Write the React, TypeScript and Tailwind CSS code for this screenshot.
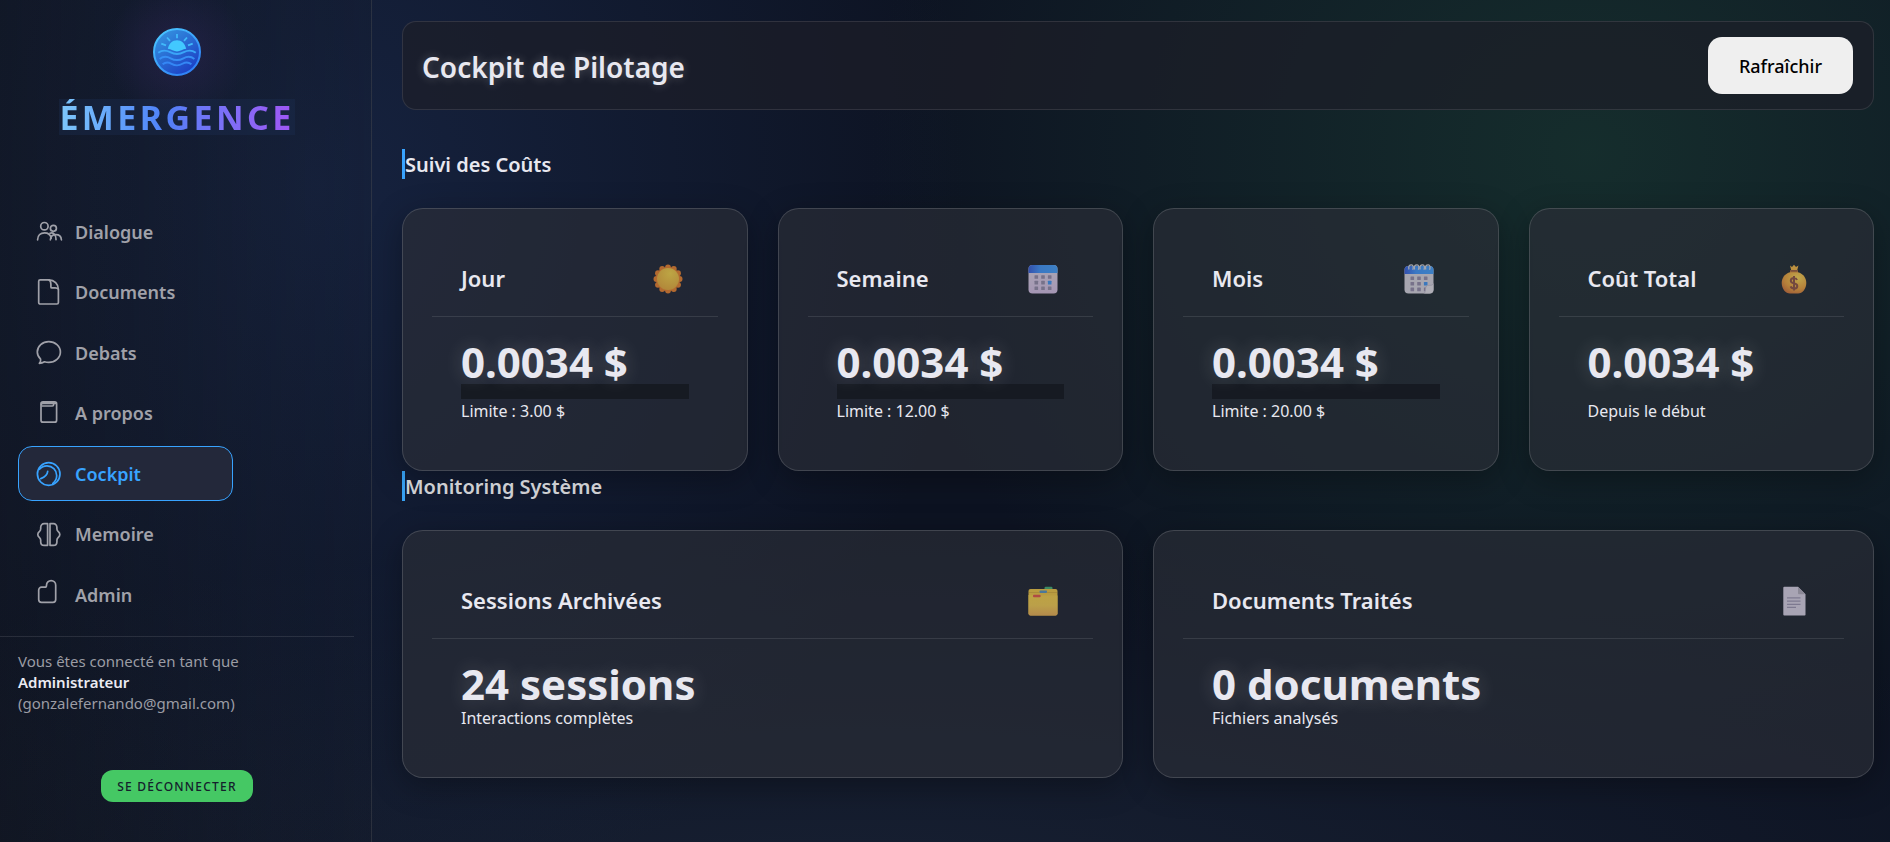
import type { ReactNode } from "react";

type NavEntry = { label: string; icon: ReactNode; active?: boolean };

function LineIcon({ children }: { children: ReactNode }) {
  return (
    <svg
      className="size-[26px] shrink-0 overflow-visible"
      viewBox="0 0 26 26"
      fill="none"
      stroke="currentColor"
      strokeWidth="1.7"
      strokeLinecap="round"
      strokeLinejoin="round"
      aria-hidden="true"
    >
      {children}
    </svg>
  );
}

const NAV: NavEntry[] = [
  {
    label: "Dialogue",
    icon: (
      <LineIcon>
        <circle cx="8.4" cy="7.2" r="3.7" />
        <circle cx="17.4" cy="9.3" r="3" />
        <path d="M1.6 20.8C1.6 16.4 4.6 13.9 8.6 13.9c3.5 0 5.9 2 6.600 5.200" />
        <path d="M14.4 20.8c.2-3.300 2.300-5.200 5.400-5.200s5.400 2 5.600 5.200" />
        <path d="M14 14.200c3.200-1.400 6 1.400 6 6.400" />
      </LineIcon>
    ),
  },
  {
    label: "Documents",
    icon: (
      <LineIcon>
        <path d="M4.2-.2H13c5.2 0 9.4 4.2 9.4 9.4v13.3a1.5 1.5 0 0 1-1.5 1.5H4.2a1.5 1.5 0 0 1-1.5-1.5V1.3A1.5 1.5 0 0 1 4.2-.2Z" />
        <path d="M13 0c1.6.8 1.9 2.4 1.9 4.6V6.9c0 .6.4 1 1 1h3.2c1.5 0 2.7.4 3.2 1.2" />
      </LineIcon>
    ),
  },
  {
    label: "Debats",
    icon: (
      <LineIcon>
        <path d="M3.4 23.4c1.1-1.300 1.500-2.700 1.200-4.300C2.500 17.200 1.300 14.700 1.300 12 1.300 6.200 6.500 1.600 12.800 1.600S24.400 6.100 24.400 12s-5.300 10.400-11.600 10.400c-1.600 0-3-.2-4.300-.6-1.600 1-3.300 1.500-5.100 1.600Z" />
      </LineIcon>
    ),
  },
  {
    label: "A propos",
    icon: (
      <LineIcon>
        <rect x="5" y=".8" width="15.6" height="20.4" rx="2" />
        <path d="M5.4 3.5C5.8 2 6.700 1.700 8 1.700h9.600v2.100c0 .8-.4 1.200-1.200 1.200H6" />
        <path d="M7 2.300h12.500" strokeWidth="2" />
      </LineIcon>
    ),
  },
  {
    label: "Cockpit",
    active: true,
    icon: (
      <LineIcon>
        <circle cx="12.7" cy="13" r="11.3" />
        <path d="M3.500 8.300C5.300 6.200 8 4.900 11 4.900c5.400 0 9.700 4.300 9.700 9.700 0 3.200-1.500 6-3.900 7.800" />
        <path d="M4.800 17.600c4.200-1.600 6.600-4 6.900-7.200" />
      </LineIcon>
    ),
  },
  {
    label: "Memoire",
    icon: (
      <LineIcon>
        <path d="M11.600 1.700v21.600H8.200c-2 0-3.500-1.400-3.500-3.400v-1.600c0-1.500-.4-2-1.200-2.700C1.200 13.700 1.200 11.300 3.500 9.400c.8-.7 1.200-1.200 1.200-2.700V5.500c0-2.300 1.400-3.800 3.500-3.800h3.400Z" />
        <path d="M14 1.700v21.600h3.400c2 0 3.500-1.400 3.500-3.400v-1.600c0-1.500.4-2 1.200-2.700 2.300-1.900 2.300-4.300 0-6.200-.8-.7-1.200-1.200-1.200-2.700V5.500c0-2.300-1.400-3.800-3.500-3.800H14Z" />
      </LineIcon>
    ),
  },
  {
    label: "Admin",
    icon: (
      <LineIcon>
        <path d="M5.500 5.200h3.300c1.200 0 1.700-.6 1.700-1.700V3.200a4.600 4.600 0 0 1 9.200 0v14.400a2.800 2.800 0 0 1-2.800 2.800H5.500a2.800 2.800 0 0 1-2.800-2.800V8a2.800 2.800 0 0 1 2.800-2.800Z" />
      </LineIcon>
    ),
  },
];

function Logo() {
  return (
    <svg className="size-12" viewBox="0 0 48 48" fill="none" aria-hidden="true">
      <defs>
        <linearGradient id="disc" x1="8" y1="4" x2="38" y2="44" gradientUnits="userSpaceOnUse">
          <stop stopColor="#3492e0" />
          <stop offset="1" stopColor="#1c3fc4" />
        </linearGradient>
        <linearGradient id="rim" x1="8" y1="4" x2="38" y2="44" gradientUnits="userSpaceOnUse">
          <stop stopColor="#49c4ff" />
          <stop offset="1" stopColor="#2f80f5" />
        </linearGradient>
      </defs>
      <circle cx="24" cy="24" r="23" fill="url(#disc)" stroke="url(#rim)" strokeWidth="2" />
      <path
        d="M24 6v4.3M14 9.500l3 3.400M34 9.500l-3 3.400M8.300 15.600l4.700 1.800M39.700 15.600 35 17.400"
        stroke="#41b9fa"
        strokeWidth="1.8"
      />
      <path
        d="M14.8 20.800C16 15.700 19.400 12.300 24 12.300s8 3.400 9.200 8.500c-1.800.1-3.200.8-4.700 1.500-3.200 1.500-5.800 1.500-9 0-1.500-.7-2.900-1.400-4.700-1.500Z"
        fill="#42c8ff"
      />
      <path d="M5.200 24.800c4-3 8-2.700 12-.6 4.600 2.400 9 2.400 13.600 0 4-2.100 8-2.400 12 .6" stroke="#3aa5f8" strokeWidth="1.9" />
      <path d="M6.600 31c3.800-3 7.400-2.700 11-.7 4.400 2.400 8.400 2.400 12.800 0 3.600-2 7.200-2.300 11 .7" stroke="#368ff5" strokeWidth="1.9" />
      <path d="M9.600 36.300c3-2.500 6-2.200 9-.5 3.800 2.200 7 2.200 10.800 0 3-1.700 6-2 9 .5" stroke="#3487f5" strokeWidth="1.9" />
    </svg>
  );
}

function SunIcon() {
  const petals = Array.from({ length: 12 }, (_, i) => (i * Math.PI) / 6);
  return (
    <svg className="size-[30px]" viewBox="0 0 30 30" aria-hidden="true">
      <defs>
        <radialGradient id="core" cx=".6" cy=".25" r=".9">
          <stop stopColor="#bda544" />
          <stop offset="1" stopColor="#b08338" />
        </radialGradient>
      </defs>
      {petals.map((a) => (
        <circle key={a} cx={15 + 11.6 * Math.sin(a)} cy={15 - 11.6 * Math.cos(a)} r="2.9" fill="#b36a30" />
      ))}
      <circle cx="15" cy="15" r="12" fill="#b36a30" />
      <circle cx="15" cy="15" r="11" fill="url(#core)" />
    </svg>
  );
}

function CalendarDots({ top }: { top: number }) {
  return (
    <>
      {[0, 1, 2].map((r) =>
        [0, 1, 2].map((c) => (
          <rect
            key={`${r}-${c}`}
            x={6.5 + c * 6.7}
            y={top + r * 5.6}
            width="3.6"
            height="3.6"
            rx=".5"
            fill={r === 1 && c === 2 ? "#3a78bd" : "#77728a"}
          />
        )),
      )}
    </>
  );
}

function WeekIcon() {
  return (
    <svg className="size-[30px]" viewBox="0 0 30 30" aria-hidden="true">
      <defs>
        <linearGradient id="band" x1="0" y1="0" x2="1" y2="0">
          <stop stopColor="#3350ad" />
          <stop offset=".4" stopColor="#3a78c4" />
          <stop offset="1" stopColor="#3d80c4" />
        </linearGradient>
        <linearGradient id="sheet" x1="0" y1="0" x2="0" y2="1">
          <stop stopColor="#aaa7b4" />
          <stop offset="1" stopColor="#a596b4" />
        </linearGradient>
      </defs>
      <rect x=".5" y="1" width="29" height="28.5" rx="4" fill="url(#sheet)" />
      <path d="M.5 9V5a4 4 0 0 1 4-4h21a4 4 0 0 1 4 4v4Z" fill="url(#band)" />
      <CalendarDots top={11.2} />
    </svg>
  );
}

function MonthIcon() {
  return (
    <svg className="size-[30px]" viewBox="0 0 30 30" aria-hidden="true">
      <rect x=".5" y="2" width="29" height="27.5" rx="4" fill="#a7a6b0" />
      <path d="M.5 10V6a4 4 0 0 1 4-4h21a4 4 0 0 1 4 4v4Z" fill="url(#band)" />
      <CalendarDots top={12.4} />
      <path d="M20 29.500c2-1 1-6 2.500-7.500s5.500.5 7-2.500v6a4 4 0 0 1-4 4Z" fill="#afaeb6" />
      <path d="M20 29.500c2-1 1-6 2.500-7.500s5.500.5 7-2.500" fill="none" stroke="#918e9d" strokeWidth=".7" />
      {[0, 1, 2, 3].map((i) => (
        <path
          key={i}
          d={`M${5 + i * 5.6} 5.5C${4 + i * 5.6} 2 ${5.5 + i * 5.6} .8 ${7.5 + i * 5.6} .8c1.600 0 2.400 2.600 1.200 5`}
          fill="none"
          stroke="#a3a5ad"
          strokeWidth="1.3"
        />
      ))}
    </svg>
  );
}

function MoneyBagIcon() {
  return (
    <svg className="size-[30px]" viewBox="0 0 30 30" aria-hidden="true">
      <defs>
        <radialGradient id="bag" cx=".65" cy=".25" r=".9">
          <stop stopColor="#c0a84c" />
          <stop offset=".6" stopColor="#b5803a" />
          <stop offset="1" stopColor="#9a5638" />
        </radialGradient>
      </defs>
      <path d="M11 1.600 13 3l2-2.200L17 3l2.400-1.400-1.200 4.600h-6Z" fill="#bd9140" />
      <path d="M11.500 6h7l1 3.500h-9Z" fill="#a8743a" />
      <path d="M11.500 6h7v1.700h-7Z" fill="#7a4f3c" />
      <path
        d="M10 8.600h10c4.400 1.600 7.300 5.700 7.300 10.400 0 5.700-3.800 10.500-8.300 10.500h-8c-4.500 0-8.300-4.800-8.300-10.500C2.700 14.300 5.600 10.200 10 8.600Z"
        fill="url(#bag)"
      />
      <path
        d="M18 16c-.5-1.300-1.600-1.900-3-1.900-1.900 0-3.200 1-3.200 2.600 0 3.700 6.500 1.700 6.500 5.200 0 1.600-1.400 2.600-3.300 2.600-1.700 0-2.900-.7-3.400-2.100M15 12v14.500"
        fill="none"
        stroke="#74493f"
        strokeWidth="2"
      />
    </svg>
  );
}

function DividersIcon() {
  return (
    <svg className="size-[30px]" viewBox="0 0 30 30" aria-hidden="true">
      <defs>
        <linearGradient id="folder" x1="0" y1="0" x2="0" y2="1">
          <stop stopColor="#bda244" />
          <stop offset=".5" stopColor="#bba049" />
          <stop offset="1" stopColor="#b48a4c" />
        </linearGradient>
      </defs>
      <rect x="16.5" y=".8" width="8" height="4" rx="1.2" fill="#3c8a62" />
      <rect x=".5" y="3" width="29" height="26.5" rx="2" fill="#b99c40" />
      <path d="M1 6.500h28" stroke="#a08236" strokeWidth=".6" />
      <rect x="11.5" y="4.6" width="7.5" height="2.3" rx=".8" fill="#4b7899" />
      <path d="M.5 9h4.600l1.400 2h6l1.200-1.600h15.800v18a2 2 0 0 1-2 2h-25a2 2 0 0 1-2-2Z" fill="url(#folder)" />
      <rect x="5" y="8.8" width="7.6" height="2.4" rx="1" fill="#b04a45" />
    </svg>
  );
}

function PageIcon() {
  return (
    <svg className="size-[30px]" viewBox="0 0 30 30" aria-hidden="true">
      <path d="M5.300.8H19l7.500 7.500v20.400a.8.8 0 0 1-.8.8H5.300a1 1 0 0 1-1-1V1.800a1 1 0 0 1 1-1Z" fill="#a8a4b4" />
      <path d="M19 .8l7.500 7.500H20a1 1 0 0 1-1-1Z" fill="#8b8896" />
      <path d="M8 11.800h13.500M8 15.200h13.500M8 18.400h13.500M8 21.400h9" stroke="#7d7990" strokeWidth="1.3" />
    </svg>
  );
}

type CardProps = {
  title: string;
  icon: ReactNode;
  value: string;
  note: string;
  meter?: "bar" | "blank";
};

function Card({ title, icon, value, note, meter }: CardProps) {
  return (
    <article className="rounded-[21px] border border-white/15 bg-[#2b2e38]/65 px-[29px] pt-[29px] pb-[47px] shadow-[0_8px_32px_rgba(0,0,0,0.3)]">
      <header className="flex h-[79px] items-center justify-between border-b border-white/10 pt-[3px] pr-[35px] pl-[29px]">
        <h3 className="text-[22px] font-semibold">{title}</h3>
        {icon}
      </header>
      <div className="px-[29px] pt-[23px]">
        <p className="text-[42px] leading-[44px] font-bold whitespace-nowrap [text-shadow:0_0_20px_rgba(255,255,255,0.2)]">
          {value}
        </p>
        {meter === "bar" && <div className="h-[15px] bg-[#161a22]" />}
        {meter === "blank" && <div className="h-[15px]" />}
        <p className="text-base leading-6">{note}</p>
      </div>
    </article>
  );
}

function SectionTitle({ children, dim }: { children: ReactNode; dim?: boolean }) {
  return (
    <h2
      className={
        dim
          ? "border-l-[3px] border-[#38a3f5] pt-0.5 text-[20px] leading-7 font-semibold text-[#cdced2]"
          : "border-l-[3px] border-[#38a3ff] pt-0.5 text-[20px] leading-7 font-semibold"
      }
    >
      {children}
    </h2>
  );
}

export default function App() {
  return (
    <div className="flex min-h-screen bg-[#0d1322] bg-[radial-gradient(ellipse_38%_75%_at_84%_18%,rgba(24,54,48,0.75),transparent),radial-gradient(ellipse_34%_90%_at_17%_22%,rgba(24,38,70,0.8),transparent),radial-gradient(ellipse_70%_45%_at_45%_108%,rgba(28,38,58,0.7),transparent)] font-['Noto_Sans',sans-serif] text-[#e8e8f0]">
      <aside className="flex w-[372px] shrink-0 flex-col border-r border-white/10 bg-[linear-gradient(90deg,rgba(18,21,28,0.4),rgba(18,21,28,0.1))] pr-[17px]">
        <div className="flex flex-col items-center bg-[radial-gradient(circle_at_50%_52px,rgba(50,38,90,0.5),transparent_70px)] pt-7">
          <Logo />
          <div className="mt-[23px] bg-[#1b2c50]/40">
            <h1 className="bg-linear-to-r from-[#7fc8fb] via-[#4f80f8] via-45% to-[#9f55f5] bg-clip-text text-[34px] leading-[36px] font-bold tracking-widest text-transparent">
              ÉMERGENCE
            </h1>
          </div>
        </div>

        <nav className="mt-[69px] flex max-h-[418px] flex-1 flex-col justify-between pl-[18px]">
          {NAV.map((item) => (
            <a
              key={item.label}
              href="#"
              aria-current={item.active ? "page" : undefined}
              className={
                item.active
                  ? "flex h-[55px] w-[215px] items-center gap-[13px] rounded-[14px] border border-[#38a3ff] bg-[#23283a] pt-px pl-[17px] text-[18px] font-semibold text-[#38a3ff]"
                  : "flex h-[55px] w-[215px] items-center gap-[13px] rounded-[14px] border border-transparent pt-px pl-[17px] text-[18px] font-semibold text-[#a0a1a9]"
              }
            >
              {item.icon}
              {item.label}
            </a>
          ))}
        </nav>

        <footer className="mt-[14px] flex flex-col border-t border-white/10 pt-[14px] pb-10">
          <p className="pl-[18px] text-[15px] leading-[21px] text-[#9b9ca4]">
            Vous êtes connecté en tant que
            <br />
            <strong className="font-semibold text-[#ebebf2]">Administrateur</strong>
            <br />
            (gonzalefernando@gmail.com)
          </p>
          <button
            type="button"
            className="mt-14 h-8 w-[152px] self-center rounded-xl bg-[#45c864] pt-px text-xs font-medium tracking-widest text-[#14202c]"
          >
            SE DÉCONNECTER
          </button>
        </footer>
      </aside>

      <main className="flex-1 pt-[21px] pr-4 pb-16 pl-[30px]">
        <header className="flex h-[89px] items-center justify-between rounded-[14px] border border-white/10 bg-[#1c1e28]/70 pr-5 pl-[19px]">
          <h1 className="pt-0.5 text-[28px] font-semibold [text-shadow:0_0_10px_rgba(255,255,255,0.25)]">
            Cockpit de Pilotage
          </h1>
          <button
            type="button"
            className="h-[57px] rounded-[14px] bg-[#efefef] px-[31px] pt-0.5 text-[18px] font-medium text-black"
          >
            Rafraîchir
          </button>
        </header>

        <section className="mt-[39px]">
          <SectionTitle>Suivi des Coûts</SectionTitle>
          <div className="mt-[29px] grid grid-cols-4 gap-[30px]">
            <Card title="Jour" icon={<SunIcon />} value="0.0034 $" note="Limite : 3.00 $" meter="bar" />
            <Card title="Semaine" icon={<WeekIcon />} value="0.0034 $" note="Limite : 12.00 $" meter="bar" />
            <Card title="Mois" icon={<MonthIcon />} value="0.0034 $" note="Limite : 20.00 $" meter="bar" />
            <Card title="Coût Total" icon={<MoneyBagIcon />} value="0.0034 $" note="Depuis le début" meter="blank" />
          </div>
        </section>

        <section>
          <SectionTitle dim>Monitoring Système</SectionTitle>
          <div className="mt-[29px] grid grid-cols-2 gap-[30px]">
            <Card title="Sessions Archivées" icon={<DividersIcon />} value="24 sessions" note="Interactions complètes" />
            <Card title="Documents Traités" icon={<PageIcon />} value="0 documents" note="Fichiers analysés" />
          </div>
        </section>
      </main>
    </div>
  );
}
